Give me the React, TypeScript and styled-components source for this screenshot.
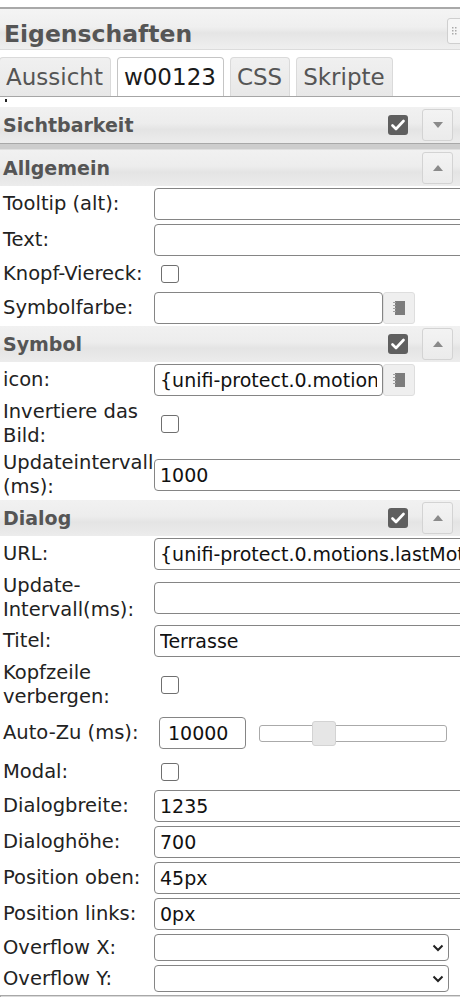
import React from "react";
import styled, { createGlobalStyle } from "styled-components";

const Global = createGlobalStyle`
  html, body { margin: 0; padding: 0; background: #fff; overflow: hidden; }
  body { font-family: "DejaVu Sans", Verdana, sans-serif; }
  #root { width: 460px; overflow: hidden; }
  * { box-sizing: border-box; }
`;

const Panel = styled.div`
  margin-top: 7px;
  border-top: 2px solid #a9a9a9;
  width: 460px;
  overflow: hidden;
`;

const TitleBar = styled.div`
  height: 41px;
  display: flex;
  align-items: flex-end;
  justify-content: space-between;
  padding-left: 4px;
  background: linear-gradient(to bottom, #f4f4f4 0%, #efefef 45%, #e5e5e5 60%, #efefef 100%);
  border-bottom: 1px solid #dcdcdc;
`;

const TitleText = styled.div`
  font-weight: bold;
  font-size: 23.5px;
  line-height: 28px;
  color: #555;
  padding-bottom: 1px;
`;

const Handle = styled.div`
  align-self: center;
  margin-top: 4px;
  width: 20px;
  height: 26px;
  margin-right: -7px;
  border: 1px solid #cfcfcf;
  border-radius: 3px;
  background: #f6f6f6;
  display: flex;
  align-items: center;
  padding-left: 4px;
`;

const TabBar = styled.div`
  display: flex;
  gap: 6px;
  padding-top: 7px;
  border-bottom: 1px solid #a6a6a6;
  background: #fff;
`;

const Tab = styled.div<{ $active?: boolean }>`
  height: 39px;
  display: flex;
  align-items: center;
  padding: 0 7px 0 6px;
  font-size: 23px;
  color: ${(p) => (p.$active ? "#1a1a1a" : "#555")};
  background: ${(p) => (p.$active ? "#fff" : "linear-gradient(to bottom, #f0f0f0, #e8e8e8)")};
  border: 1px solid ${(p) => (p.$active ? "#c5c5c5" : "#dadada")};
  border-bottom: none;
  border-radius: 4px 4px 0 0;
  &:first-child { margin-left: -1px; }
`;

const Gap = styled.div`
  height: 10px;
  position: relative;
`;

const Dot = styled.span`
  position: absolute;
  left: 5px;
  top: 2px;
  width: 2px;
  height: 3px;
  background: #222;
`;

const SectionHeader = styled.div`
  height: 36px;
  display: flex;
  align-items: center;
  padding: 0 7px 0 3px;
  background: linear-gradient(to bottom, #f1f1f1 0%, #ededed 45%, #e4e4e4 62%, #ececec 100%);
  font-weight: bold;
  font-size: 19px;
  color: #555;
`;

const HeaderTitle = styled.div`
  flex: 1;
`;

const HeaderCheck = styled.span`
  width: 20px;
  height: 20px;
  border-radius: 3px;
  background: #5f5f5f;
  display: flex;
  align-items: center;
  justify-content: center;
  margin-right: 14px;
`;

const ToggleBtn = styled.span`
  width: 31px;
  height: 32px;
  border: 1px solid #d3d3d3;
  border-radius: 3px;
  background: linear-gradient(to bottom, #f3f3f3, #ebebeb);
  display: flex;
  align-items: center;
  justify-content: center;
`;

const Divider = styled.div`
  height: 7px;
  background: #cdcdcd;
  border-top: 1px solid #a8a8a8;
  border-bottom: 1px solid #e0e0e0;
`;

const Row = styled.div<{ $h?: number }>`
  display: grid;
  grid-template-columns: 154px 1fr;
  align-items: center;
  padding: 2px 0;
  min-height: ${(p) => p.$h ?? 36}px;
`;

const Label = styled.div`
  font-size: 19.5px;
  line-height: 23.5px;
  color: #222;
  padding-left: 3px;
  white-space: pre-line;
`;

const Field = styled.div`
  display: flex;
  align-items: center;
`;

const TextInput = styled.input<{ $w?: number }>`
  width: ${(p) => p.$w ?? 320}px;
  height: 32px;
  border: 1px solid #858585;
  border-radius: 4px;
  padding: 0 5px;
  font-family: "DejaVu Sans", Verdana, sans-serif;
  font-size: 19px;
  color: #111;
  background: #fff;
  outline: none;
  flex-shrink: 0;
`;

const NumInput = styled(TextInput)`
  margin-left: 5px;
  padding: 0 8px;
`;

const ColorBtn = styled.span`
  width: 32px;
  height: 32px;
  border: 1px solid #dedede;
  border-radius: 3px;
  background: #efefef;
  display: flex;
  align-items: center;
  justify-content: center;
  flex-shrink: 0;
`;

const Check = styled.span`
  width: 18px;
  height: 18px;
  margin: 5px 0 5px 7px;
  border: 1.5px solid #6f6f6f;
  border-radius: 3px;
  background: #fff;
`;

const Slider = styled.div`
  position: relative;
  margin-left: 13px;
  width: 188px;
  height: 17px;
  border: 1px solid #aaa;
  border-radius: 3px;
  background: #fff;
`;

const SliderHandle = styled.span`
  position: absolute;
  top: -5px;
  width: 24px;
  height: 25px;
  border: 1px solid #d3d3d3;
  border-radius: 3px;
  background: #e6e6e6;
`;

const Select = styled.div`
  width: 295px;
  height: 27px;
  border: 1px solid #858585;
  border-radius: 4px;
  background: #fff;
  display: flex;
  align-items: center;
  justify-content: flex-end;
  padding-right: 4px;
`;

const SelectRow = styled(Row)`
  min-height: 31px;
`;

const BottomBar = styled.div`
  height: 6px;
  margin-top: 1px;
  background: #dadada;
  border-top: 1px solid #a8a8a8;
  border-left: 1px solid #a8a8a8;
`;

const CheckMark = () => (
  <svg width="14" height="12" viewBox="0 0 14 12">
    <path d="M1.5 6.5 L5 10 L12.5 2" stroke="#fff" strokeWidth="2.6" fill="none" strokeLinecap="round" strokeLinejoin="round" />
  </svg>
);

const Tri = ({ up }: { up?: boolean }) => (
  <svg width="10" height="6" viewBox="0 0 10 6">
    {up ? <polygon points="0,6 5,0 10,6" fill="#8a8a8a" /> : <polygon points="0,0 10,0 5,6" fill="#8a8a8a" />}
  </svg>
);

const NoteIcon = () => (
  <svg width="12" height="14" viewBox="0 0 12 14">
    <rect x="2" y="0" width="10" height="14" fill="#7c7c7c" />
    <rect x="0" y="1" width="3" height="1" fill="#a0a0a0" />
    <rect x="0" y="4" width="3" height="1" fill="#a0a0a0" />
    <rect x="0" y="7" width="3" height="1" fill="#a0a0a0" />
    <rect x="0" y="10" width="3" height="1" fill="#a0a0a0" />
  </svg>
);

const Chevron = () => (
  <svg width="12" height="8" viewBox="0 0 12 8">
    <path d="M1.5 1.5 L6 6 L10.5 1.5" stroke="#222" strokeWidth="2" fill="none" />
  </svg>
);

const DotsIcon = () => (
  <svg width="6" height="8" viewBox="0 0 6 8">
    {[0, 3, 6].map((y) =>
      [0, 3].map((x) => <rect key={`${x}-${y}`} x={x} y={y} width="1.5" height="1.5" fill="#aaa" />)
    )}
  </svg>
);

type HeaderProps = { title: string; checked?: boolean; up?: boolean };
const Header = ({ title, checked, up }: HeaderProps) => (
  <SectionHeader>
    <HeaderTitle>{title}</HeaderTitle>
    {checked && (
      <HeaderCheck>
        <CheckMark />
      </HeaderCheck>
    )}
    <ToggleBtn>
      <Tri up={up} />
    </ToggleBtn>
  </SectionHeader>
);

const TextRow = ({ label, value = "", h }: { label: string; value?: string; h?: number }) => (
  <Row $h={h}>
    <Label>{label}</Label>
    <Field>
      <TextInput readOnly value={value} />
    </Field>
  </Row>
);

const CheckRow = ({ label, h = 32 }: { label: string; h?: number }) => (
  <Row $h={h}>
    <Label>{label}</Label>
    <Field>
      <Check />
    </Field>
  </Row>
);

const ColorRow = ({ label, value = "" }: { label: string; value?: string }) => (
  <Row>
    <Label>{label}</Label>
    <Field>
      <TextInput $w={229} readOnly value={value} />
      <ColorBtn>
        <NoteIcon />
      </ColorBtn>
    </Field>
  </Row>
);

const SelRow = ({ label }: { label: string }) => (
  <SelectRow $h={31}>
    <Label>{label}</Label>
    <Field>
      <Select>
        <Chevron />
      </Select>
    </Field>
  </SelectRow>
);

const URL_VALUE = "{unifi-protect.0.motions.lastMotion.thumbnail}";

export default function App() {
  const sliderPos = 52;
  return (
    <>
      <Global />
      <Panel>
        <TitleBar>
          <TitleText>Eigenschaften</TitleText>
          <Handle>
            <DotsIcon />
          </Handle>
        </TitleBar>
        <TabBar>
          <Tab>Aussicht</Tab>
          <Tab $active>w00123</Tab>
          <Tab>CSS</Tab>
          <Tab>Skripte</Tab>
        </TabBar>
        <Gap>
          <Dot />
        </Gap>
        <Header title="Sichtbarkeit" checked />
        <Divider />
        <Header title="Allgemein" up />
        <TextRow label="Tooltip (alt):" />
        <TextRow label="Text:" />
        <CheckRow label="Knopf-Viereck:" />
        <ColorRow label="Symbolfarbe:" />
        <Header title="Symbol" checked up />
        <ColorRow label="icon:" value={URL_VALUE} />
        <CheckRow label={"Invertiere das\nBild:"} h={51} />
        <TextRow label={"Updateintervall\n(ms):"} value="1000" h={51} />
        <Header title="Dialog" checked up />
        <TextRow label="URL:" value={URL_VALUE} />
        <TextRow label={"Update-\nIntervall(ms):"} h={51} />
        <TextRow label="Titel:" value="Terrasse" />
        <CheckRow label={"Kopfzeile\nverbergen:"} h={51} />
        <Row $h={46}>
          <Label>Auto-Zu (ms):</Label>
          <Field>
            <NumInput $w={87} readOnly value="10000" />
            <Slider>
              <SliderHandle style={{ left: `${sliderPos}px` }} />
            </Slider>
          </Field>
        </Row>
        <CheckRow label="Modal:" />
        <TextRow label="Dialogbreite:" value="1235" />
        <TextRow label="Dialoghöhe:" value="700" />
        <TextRow label="Position oben:" value="45px" />
        <TextRow label="Position links:" value="0px" />
        <SelRow label="Overflow X:" />
        <SelRow label="Overflow Y:" />
        <BottomBar />
      </Panel>
    </>
  );
}
